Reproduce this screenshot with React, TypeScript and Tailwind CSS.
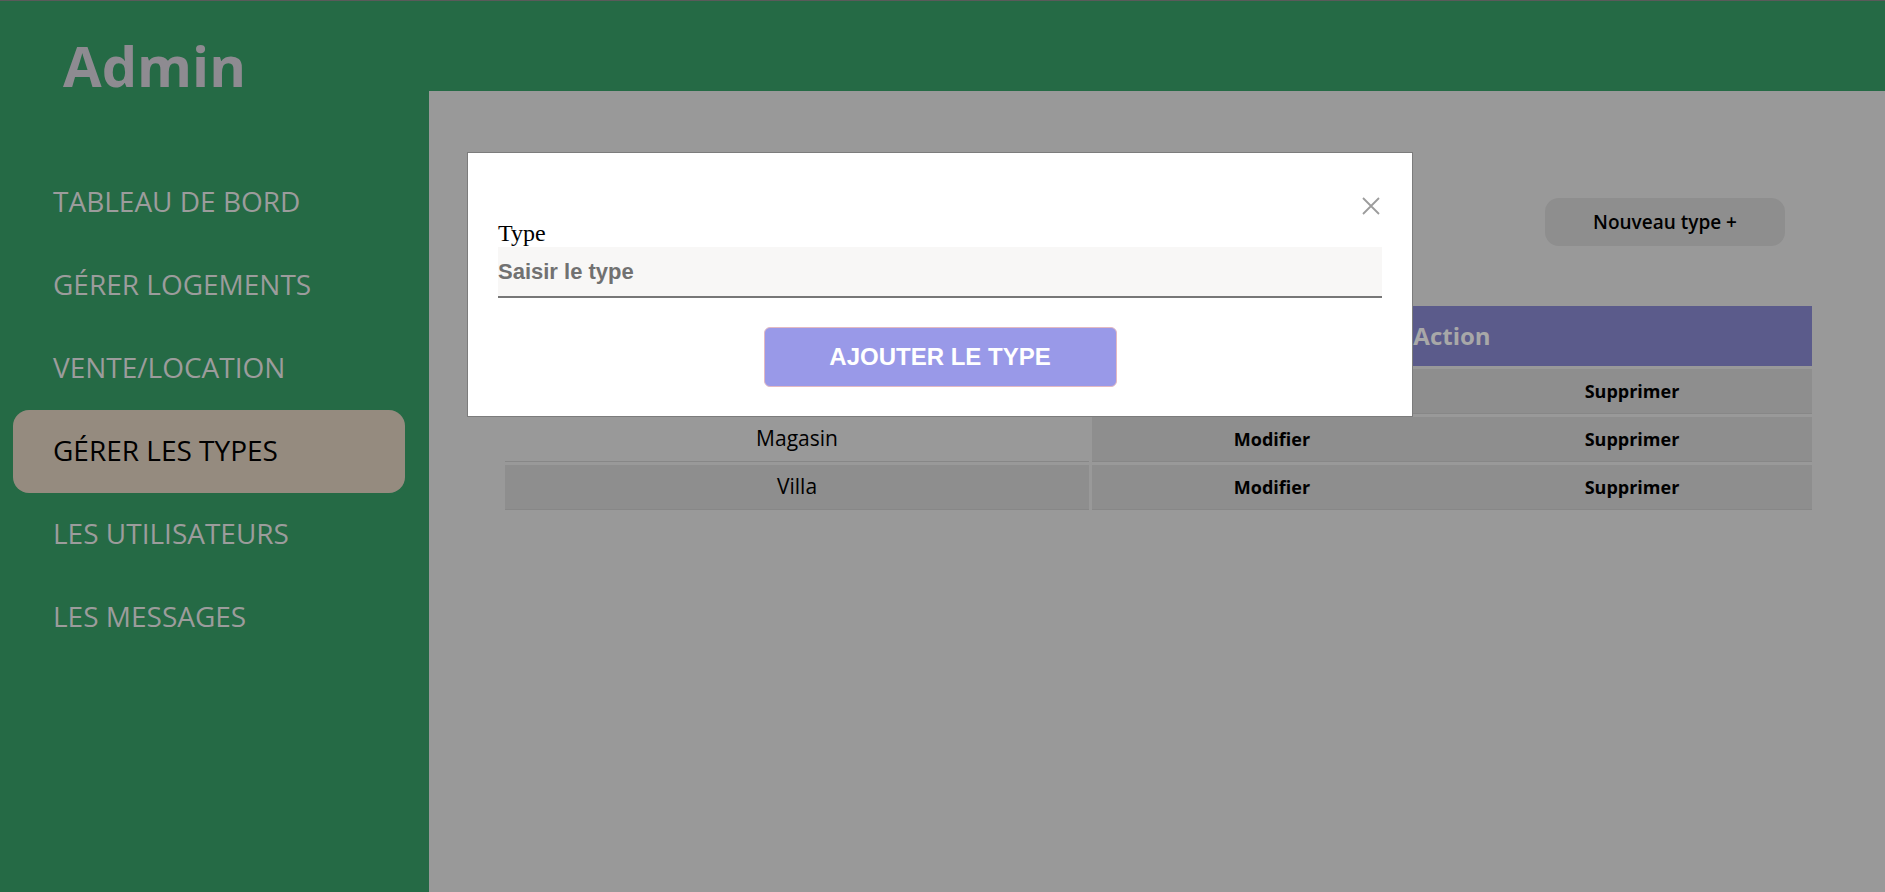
const navItems = [
  "TABLEAU DE BORD",
  "GÉRER LOGEMENTS",
  "VENTE/LOCATION",
  "GÉRER LES TYPES",
  "LES UTILISATEURS",
  "LES MESSAGES",
];

const types = [
  { name: "Appartement", dark: true },
  { name: "Magasin", dark: false },
  { name: "Villa", dark: true },
];

export default function App() {
  return (
    <div className="flex h-screen flex-col overflow-hidden border-t border-[#5a5a5a] bg-[#256a45] font-['Open_Sans',sans-serif]">
      <header className="h-[90px] shrink-0">
        <h1 className="ml-[63px] mt-[36px] text-[56px] font-bold leading-none text-[#8e8b91]">Admin</h1>
      </header>

      <div className="flex min-h-0 flex-1">
        <aside className="w-[429px] shrink-0 pl-[13px] pr-[24px] pt-[70px]">
          <nav className="flex flex-col">
            {navItems.map((item) => (
              <a
                key={item}
                href="#"
                className={
                  item === "GÉRER LES TYPES"
                    ? "flex h-[83px] items-center rounded-[16px] bg-[#958b7f] pb-[3px] pl-[40px] text-[28px] text-black"
                    : "flex h-[83px] items-center pb-[3px] pl-[40px] text-[28px] text-[#9c9c9c]"
                }
              >
                {item}
              </a>
            ))}
          </nav>
        </aside>

        <main className="relative flex-1 bg-[#999999] pl-[73px] pr-[70px] pt-[107px]">
          <div className="flex justify-end">
            <button className="mr-[30px] h-[48px] w-[240px] rounded-[14px] bg-[#8e8e8e] text-[19px] font-semibold text-black">
              Nouveau type +
            </button>
          </div>

          <table className="mt-[57px] w-full border-separate border-spacing-[3px]">
            <thead>
              <tr>
                <th className="h-[60px] w-[584px] bg-[#5b5b8b] text-[24px] font-bold text-[#a8a8a8]">Type</th>
                <th className="h-[60px] bg-[#5b5b8b] text-[24px] font-bold text-[#a8a8a8]">Action</th>
              </tr>
            </thead>
            <tbody>
              {types.map((t) => (
                <tr key={t.name}>
                  <td
                    className={
                      t.dark
                        ? "h-[45px] border-b border-[#878787] bg-[#8e8e8e] text-center text-[21px] text-black"
                        : "h-[45px] border-b border-[#878787] bg-[#999999] text-center text-[21px] text-black"
                    }
                  >
                    {t.name}
                  </td>
                  <td className="h-[45px] border-b border-[#878787] bg-[#8e8e8e]">
                    <div className="flex text-[18px] font-bold text-black">
                      <a href="#" className="flex-1 text-center">Modifier</a>
                      <a href="#" className="flex-1 text-center">Supprimer</a>
                    </div>
                  </td>
                </tr>
              ))}
            </tbody>
          </table>

          {/* modal */}
          <div className="absolute left-[38px] top-[61px] h-[265px] w-[946px] border border-[#7c7c7c] bg-white px-[30px] pt-[44px]">
            <div className="flex h-[18px] justify-end pr-[2px]">
              <button aria-label="Fermer" className="h-[18px] w-[18px]">
                <svg viewBox="0 0 18 18" className="h-[18px] w-[18px]" fill="none" stroke="#9c9c9c" strokeWidth="1.8">
                  <path d="M1 1L17 17M17 1L1 17" />
                </svg>
              </button>
            </div>
            <label className="mt-[5px] block font-['Liberation_Serif',serif] text-[24px] leading-[27px] text-black">
              Type
            </label>
            <input
              type="text"
              placeholder="Saisir le type"
              className="block h-[51px] w-full border-b-2 border-[#777777] bg-[#f8f7f6] font-['Liberation_Sans',Arial,sans-serif] text-[22px] font-bold outline-none placeholder:text-[#717171]"
            />
            <button className="mx-auto mt-[29px] block h-[60px] w-[353px] rounded-[6px] border border-[#e3b9c2] bg-[#9999e8] font-['Liberation_Sans',Arial,sans-serif] text-[24px] font-bold text-white">
              AJOUTER LE TYPE
            </button>
          </div>
        </main>
      </div>
    </div>
  );
}
